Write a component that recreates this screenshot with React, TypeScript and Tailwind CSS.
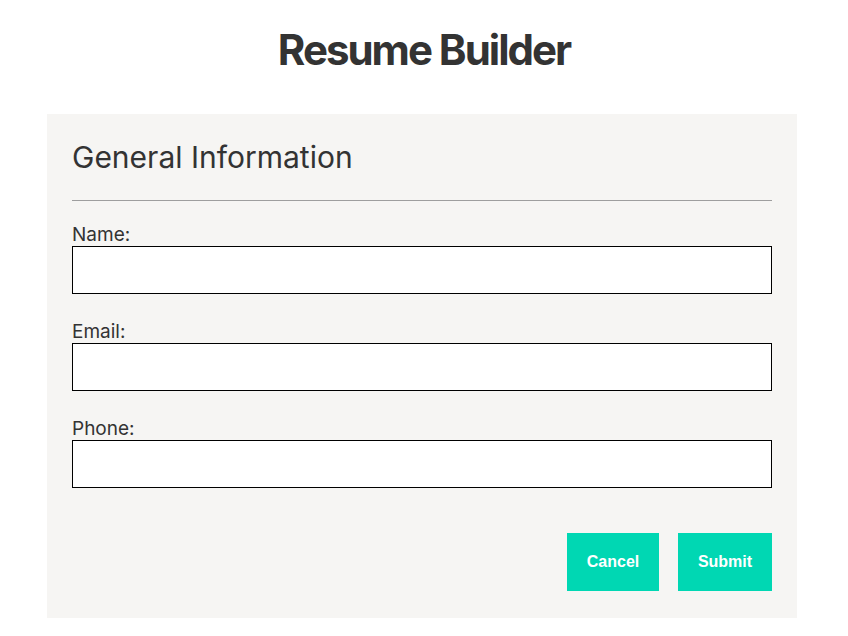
import React from 'react';

const fields = ['Name', 'Email', 'Phone'];

const App: React.FC = () => {
  return (
    <div className="min-h-[636px] bg-white font-['Inter',sans-serif] text-[#333333]">
      <h1 className="pt-[22px] text-center text-[42px] leading-[56px] font-bold tracking-[-2px]">Resume Builder</h1>
      <div className="ml-[47px] mt-[36px] w-[750px] bg-[#f6f5f3] px-[25px] pt-[26px] pb-[27px]">
        <h2 className="text-[30px] leading-[34px] font-normal">General Information</h2>
        <hr className="mt-[26px] border-t border-[#9e9e9e]" />
        <form className="mt-[23px] flex flex-col gap-[27px]">
          {fields.map((f) => (
            <div key={f} className="flex flex-col">
              <label className="text-[19px] leading-[22px]">{f}:</label>
              <input type="text" className="h-[48px] w-full border border-black bg-white px-2 outline-none" />
            </div>
          ))}
        </form>
        <div className="mt-[45px] flex justify-end gap-[19px]">
          <button className="h-[58px] w-[92px] bg-[#00d7b3] font-['Liberation_Sans',sans-serif] text-[16px] font-bold text-white">Cancel</button>
          <button className="h-[58px] w-[94px] bg-[#00d7b3] font-['Liberation_Sans',sans-serif] text-[16px] font-bold text-white">Submit</button>
        </div>
      </div>
    </div>
  );
};

export default App;
